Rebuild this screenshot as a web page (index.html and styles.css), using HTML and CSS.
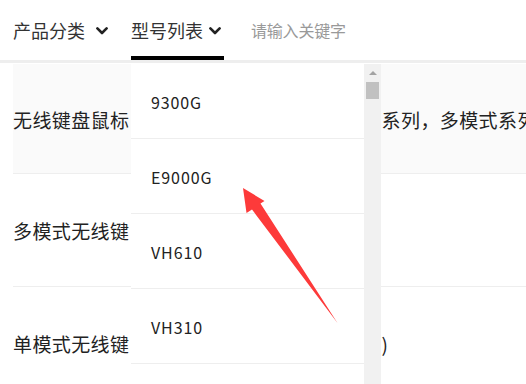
FILE: index.html
```html
<!DOCTYPE html>
<html lang="zh-CN">
<head>
  <meta charset="UTF-8">
  <meta name="viewport" content="width=device-width, initial-scale=1.0">
  <title>型号列表</title>
  <link rel="stylesheet" href="styles.css">
</head>
<body>
  <div id="nav">
    <div class="nav-item first">
      <span>产品分类</span>
      <svg class="chevron" width="12" height="8" viewBox="0 0 12 8"><polyline points="1.4,1.4 6,6 10.6,1.4" /></svg>
    </div>
    <div class="nav-item active">
      <span>型号列表</span>
      <svg class="chevron" width="12" height="8" viewBox="0 0 12 8"><polyline points="1.4,1.4 6,6 10.6,1.4" /></svg>
    </div>
    <input id="search" type="text" placeholder="请输入关键字">
  </div>

  <div id="list">
    <div class="row current">无线键盘鼠标：静音系列，轻薄系列，商务系列，多模式系列，单模式系列</div>
    <div class="row">多模式无线键鼠（蓝牙）</div>
    <div class="row">单模式无线键鼠（适用于办公、家用等场景)</div>
  </div>

  <!-- dropdown of the "型号列表" tab -->
  <div id="dropdown">
    <div class="options">
      <div class="option">9300G</div>
      <div class="option">E9000G</div>
      <div class="option">VH610</div>
      <div class="option">VH310</div>
      <div class="option">VH100</div>
    </div>
    <div class="scrollbar">
      <span class="scroll-up"></span>
      <span class="scroll-thumb"></span>
    </div>
  </div>

  <svg id="pointer" width="526" height="384" viewBox="0 0 526 384">
    <polygon points="243,188 264.5,201 260.5,203.5 337.5,323 252,209.5 246.5,213" />
  </svg>
</body>
</html>
```

FILE: styles.css
```css
body {
  margin: 0;
  padding: 0;
  width: 526px;
  height: 384px;
  overflow: hidden;
  background-color: white;
  color: #333;
  font-family: "Noto Sans CJK SC", "Noto Sans", sans-serif;
}

#nav {
  height: 60px;
  display: flex;
  align-items: center;
  padding-left: 13px;
  border-bottom: 3px solid #eee;
}

.nav-item {
  height: 60px;
  display: flex;
  align-items: center;
  font-size: 18px;
  position: relative;
  margin-right: 30px;
}

.nav-item.first {
  margin-right: 23px;
}

.nav-item.first .chevron {
  margin-left: 11px;
}

.chevron {
  margin-left: 6px;
  margin-top: 1px;
}

.chevron polyline {
  fill: none;
  stroke: #222;
  stroke-width: 2.6;
  stroke-linecap: round;
  stroke-linejoin: round;
}

.nav-item.active::after {
  content: "";
  position: absolute;
  left: 0;
  right: -3px;
  bottom: 0;
  height: 4px;
  background-color: black;
}

#search {
  border: none;
  outline: none;
  padding: 0;
  width: 200px;
  font-family: inherit;
  font-size: 16px;
  letter-spacing: -0.2px;
  color: #333;
  background: transparent;
}

#search::placeholder {
  color: #999;
}

#list {
  margin-left: 13px;
  margin-top: 1px;
}

.row {
  height: 113px;
  display: flex;
  align-items: center;
  white-space: nowrap;
  font-size: 19px;
  letter-spacing: 0.4px;
  border-bottom: 1px solid #eee;
  box-sizing: border-box;
  color: #222;
}

.row.current {
  height: 110px;
  padding-top: 2px;
  background-color: #fafafa;
}

#dropdown {
  position: absolute;
  left: 131px;
  top: 64px;
  width: 250px;
  height: 320px;
  display: flex;
  background-color: white;
  overflow: hidden;
}

.options {
  flex: 1;
}

.option {
  height: 75px;
  display: flex;
  align-items: center;
  padding-left: 20px;
  padding-top: 2px;
  font-size: 16px;
  letter-spacing: 0.9px;
  color: #222;
  border-bottom: 1px solid #eee;
  box-sizing: border-box;
}

.scrollbar {
  width: 17px;
  background-color: #f1f1f1;
  display: flex;
  flex-direction: column;
  align-items: center;
}

.scroll-up {
  margin-top: 7px;
  width: 0;
  height: 0;
  border-left: 4px solid transparent;
  border-right: 4px solid transparent;
  border-bottom: 4px solid #a3a3a3;
}

.scroll-thumb {
  margin-top: 7px;
  width: 13px;
  height: 17px;
  background-color: #c1c1c1;
}

#pointer {
  position: absolute;
  left: 0;
  top: 0;
}

#pointer polygon {
  fill: #fd3a3a;
}
```
